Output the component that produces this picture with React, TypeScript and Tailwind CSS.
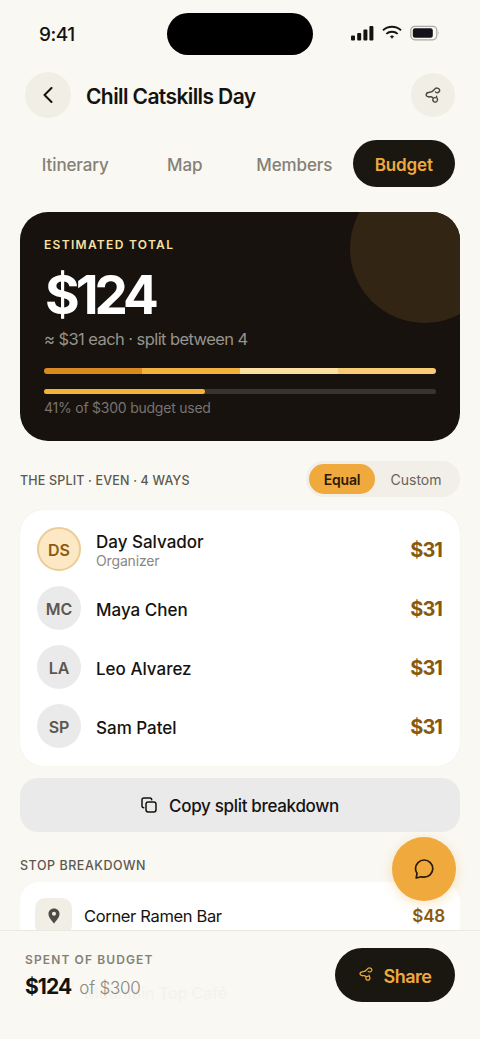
import React from "react";

function NodesIcon({ className }: { className?: string }) {
  return (
    <svg viewBox="0 0 16 16" fill="none" stroke="currentColor" strokeWidth="1.400" strokeLinecap="round" strokeLinejoin="round" className={className}>
      <path d="M4 9.900C2.300 9.900 1.200 8.900 1.200 7.700C1.200 6.400 2.300 5.600 3.700 5.500C6.200 5.400 8 4.500 9.200 2.700C10.100 1.300 11.700.7 13.100 1.300C14.700 1.900 15.100 3.700 14.100 4.800C13.200 5.800 11.600 5.900 10.500 5" />
      <path d="M4 9.900C5.600 9.600 7 9.800 8 10.900" />
      <path d="M11.500 9.300C11.300 10.600 12.700 11.500 12.500 13C12.300 14.500 10.900 15.400 9.500 15C8 14.500 7.400 12.900 8 11.700C8.400 10.800 9.400 10.500 10.300 10.700" />
    </svg>
  );
}

function StatusBar() {
  return (
    <div className="flex h-[68px] shrink-0 items-center justify-between pl-[39px] pr-10">
      <div className="w-[128px] text-[19px] font-medium leading-none tracking-[-0.500px]">9:41</div>
      <div className="h-[42px] w-[146px] rounded-full bg-black" />
      <div className="flex w-[127px] justify-end gap-2 pb-[2px]">
        <svg viewBox="0 0 24 16" className="h-4 w-6" fill="#15130f">
          <rect x="1" y="10.500" width="4" height="5" rx="1" />
          <rect x="7.200" y="8" width="4" height="7.500" rx="1" />
          <rect x="13.400" y="4.500" width="4" height="11" rx="1" />
          <rect x="19.400" y="1" width="4" height="14.500" rx="1" />
        </svg>
        <svg viewBox="0 0 20 16" className="h-4 w-5" fill="none" stroke="#15130f" strokeWidth="1.900">
          <path d="M1 5.300C6 .6 14 .6 19 5.300" />
          <path d="M4.300 8.900C7.500 6 12.500 6 15.700 8.900" />
          <path d="M10 13.400L8.200 11.300Q10 10.200 11.800 11.300Z" fill="#15130f" strokeWidth=".5" />
        </svg>
        <svg viewBox="0 0 30 16" className="h-4 w-[30px]">
          <rect x=".8" y="1.300" width="26" height="13.500" rx="4" fill="none" stroke="#aaa9a5" strokeWidth="1.200" />
          <rect x="2.800" y="3.300" width="20" height="9.500" rx="2.200" fill="#15131a" />
          <path d="M28.500 6v4q1.300-2 0-4" fill="#aaa9a5" />
        </svg>
      </div>
    </div>
  );
}

const people = [
  { initials: "DS", name: "Day Salvador", role: "Organizer" },
  { initials: "MC", name: "Maya Chen" },
  { initials: "LA", name: "Leo Alvarez" },
  { initials: "SP", name: "Sam Patel" },
];

export default function App() {
  return (
    <div className="relative flex h-[1039px] w-[480px] flex-col overflow-hidden bg-[#f9f8f2] font-['Inter','Liberation_Sans',sans-serif] text-[#15130f]">
      <StatusBar />

      <header className="flex h-[54px] shrink-0 items-center pl-[25px] pr-[25px]">
        <button className="flex size-[46px] items-center justify-center rounded-full bg-[#f1eee6]">
          <svg viewBox="0 0 10 16" className="h-4 w-[10px]" fill="none" stroke="currentColor" strokeWidth="2" strokeLinecap="round" strokeLinejoin="round">
            <path d="M8.500 1L1.500 8l7 7" />
          </svg>
        </button>
        <h1 className="ml-[15px] flex-1 whitespace-nowrap pt-[3px] text-[21px] font-semibold tracking-[-0.600px]">Chill Catskills Day</h1>
        <button className="flex size-11 items-center justify-center rounded-full bg-[#f1eee6] text-[#4b4740]">
          <NodesIcon className="size-4" />
        </button>
      </header>

      <nav className="mt-[18px] grid h-[47px] shrink-0 grid-cols-4 gap-[7px] pl-[24px] pr-[25px] text-[17px] font-medium leading-6 tracking-[-0.120px] text-[#858077]">
        <div className="flex items-center justify-center pt-[3px]">Itinerary</div>
        <div className="flex items-center justify-center pt-[3px]">Map</div>
        <div className="flex items-center justify-center pt-[3px]">Members</div>
        <div className="flex items-center justify-center rounded-full bg-[#1a1710] pt-[3px] font-semibold text-[#f0a93c]">Budget</div>
      </nav>

      <main className="mt-[24.500px] flex flex-col px-5">
        <section className="relative h-[229px] shrink-0 overflow-hidden rounded-[28px] bg-[#17120e] px-6">
          <div className="absolute left-[330px] top-[-38px] size-[149px] rounded-full bg-[#332514]" />
          <div className="mt-[25px] h-4 text-[12px] font-semibold leading-4 tracking-[1.300px] text-[#f8e0a0]">ESTIMATED TOTAL</div>
          <div className="mt-[14px] h-[56px] pl-px text-[53px] font-bold leading-[56px] tracking-[-4px] text-white">$124</div>
          <div className="mt-[6px] h-5 text-[16.500px] leading-5 tracking-[-0.570px] text-[#96928d]">≈ $31 each · split between 4</div>
          <div className="mt-[19px] grid h-[6.500px] grid-cols-4 overflow-hidden rounded-full">
            <div className="bg-[#da8b20]" />
            <div className="bg-[#f2b23c]" />
            <div className="bg-[#fbe0a2]" />
            <div className="bg-[#f8cc74]" />
          </div>
          <div className="mt-[14.500px] h-[5.500px] rounded-full bg-[#3a342f]">
            <div className="h-full w-[41%] rounded-full bg-[#f2b23c]" />
          </div>
          <div className="mt-[4px] h-5 text-[14px] leading-5 tracking-[-0.230px] text-[#77736e]">41% of $300 budget used</div>
        </section>

        <div className="mt-[20px] flex h-9 items-center justify-between">
          <div className="pt-[4px] text-[12.500px] font-medium leading-4 tracking-[0.170px] text-[#5c5850]">THE SPLIT · EVEN · 4 WAYS</div>
          <div className="flex h-9 w-[154px] items-center rounded-full bg-[#f1efe8] p-[3px] text-[14px]">
            <div className="flex h-[30px] w-[66px] items-center justify-center rounded-full bg-[#f0a93c] pt-px font-semibold tracking-[-0.200px] text-[#2a1a05]">Equal</div>
            <div className="flex flex-1 items-center justify-center pt-px text-[#68635b]">Custom</div>
          </div>
        </div>

        <section className="mt-[13px] flex h-[256px] flex-col rounded-[24px] bg-white px-[17px] pt-[10px] shadow-[0_0_2px_rgba(80,70,40,0.06)]">
          {people.map((p) => (
            <div key={p.name} className="flex h-[59px] items-center">
              <div className={p.role ? "flex size-11 items-center justify-center rounded-full border-2 border-[#ebcc94] bg-[#fde8c6] pt-px text-[16px] font-semibold text-[#8c5a0c]" : "flex size-11 items-center justify-center rounded-full bg-[#eaeaea] pt-px text-[16px] font-semibold text-[#5c574f]"}>
                {p.initials}
              </div>
              <div className="ml-[15px] flex-1 pt-[3px]">
                <div className="text-[17px] font-medium leading-5 tracking-[0px]">{p.name}</div>
                {p.role && <div className="text-[14px] leading-[18px] tracking-[-0.150px] text-[#8b877f]">{p.role}</div>}
              </div>
              <div className="pr-px pt-[2px] text-[20px] font-bold tracking-[-1px] text-[#87590f]">$31</div>
            </div>
          ))}
        </section>

        <button className="mt-[12.500px] flex h-[54px] shrink-0 items-center justify-center gap-[12px] rounded-[18px] bg-[#eaeaea] text-[17px] font-medium tracking-[-0.320px]">
          <svg viewBox="0 0 16 16" className="size-4" fill="none" stroke="currentColor" strokeWidth="1.500" strokeLinejoin="round" strokeLinecap="round">
            <rect x="5" y="5" width="10" height="10" rx="2.200" />
            <path d="M2.800 10.700C1.500 10.700 1 10.100 1 9V2.800C1 1.500 1.600 1 2.800 1H9c1.100 0 1.700.5 1.700 1.800" />
          </svg>
          <span className="pt-[3px]">Copy split breakdown</span>
        </button>

        <div className="mt-[26px] h-4 text-[12.500px] font-medium leading-4 tracking-[0.530px] text-[#5c5850]">STOP BREAKDOWN</div>
        <section className="mt-[8px] h-[180px] rounded-t-[20px] bg-white pl-[15px] pr-[15px] pt-[15px]">
          <div className="flex h-[38px] items-center">
            <div className="flex size-[37px] items-center justify-center rounded-[10px] bg-[#f1eee6]">
              <svg viewBox="0 0 12 16" className="h-4 w-3" fill="#4e4a44" fillRule="evenodd">
                <path d="M6 .5C2.700.5.500 2.900.5 6 .5 9.700 3.900 12.600 6 15.500 8.100 12.600 11.500 9.700 11.500 6 11.500 2.900 9.300.5 6 .5ZM6 3.800a2 2 0 1 1 0 4a2 2 0 1 1 0-4Z" />
              </svg>
            </div>
            <div className="ml-3 flex-1 text-[16.500px] tracking-[-0.340px]">Corner Ramen Bar</div>
            <div className="pt-[2px] text-[17px] font-semibold tracking-[-0.200px] text-[#87590f]">$48</div>
          </div>
        </section>
      </main>

      <button className="absolute left-[391.500px] top-[837px] flex size-16 items-center justify-center rounded-full bg-[#f0a93c] text-[#2a1a05] shadow-[0_3px_12px_rgba(240,169,60,0.300)]">
        <svg viewBox="0 0 22 22" className="size-[22px]" fill="none" stroke="currentColor" strokeWidth="1.700" strokeLinecap="round" strokeLinejoin="round">
          <path d="M3.200 20L4 15.300C3 14 2.500 12.400 2.500 10.600C2.500 5.900 6.400 2 11.200 2S19.800 5.900 19.800 10.600S16 19.200 11.200 19.200C10.100 19.200 9.100 19 8.200 18.700Z" />
        </svg>
      </button>

      <footer className="absolute bottom-0 left-0 flex h-[109px] w-full items-start justify-between border-t border-[#ebe9e1] bg-[#f9f8f2] px-[25px] pt-[17px]">
        <div className="relative">
          <div className="absolute left-[59px] top-[35px] whitespace-nowrap text-[16.500px] leading-5 tracking-[-0.300px] text-[#f4f2ec]">Mountain Top Café</div>
          <div className="relative mt-[4px] h-4 text-[12px] font-semibold leading-4 tracking-[1.120px] text-[#858077]">SPENT OF BUDGET</div>
          <div className="relative mt-[5px] flex items-baseline leading-7">
            <span className="text-[21px] font-bold tracking-[-0.900px]">$124</span>
            <span className="ml-2 text-[17px] font-light tracking-[-0.200px] text-[#8b877f]">of $300</span>
          </div>
        </div>
        <button className="flex h-[54px] w-[120px] items-center justify-center gap-[11px] rounded-full bg-[#1a1710] text-[18px] font-semibold tracking-[-0.500px] text-[#f0a93c]">
          <NodesIcon className="mb-[2px] size-[14px]" />
          <span className="pt-[2px]">Share</span>
        </button>
      </footer>
    </div>
  );
}
